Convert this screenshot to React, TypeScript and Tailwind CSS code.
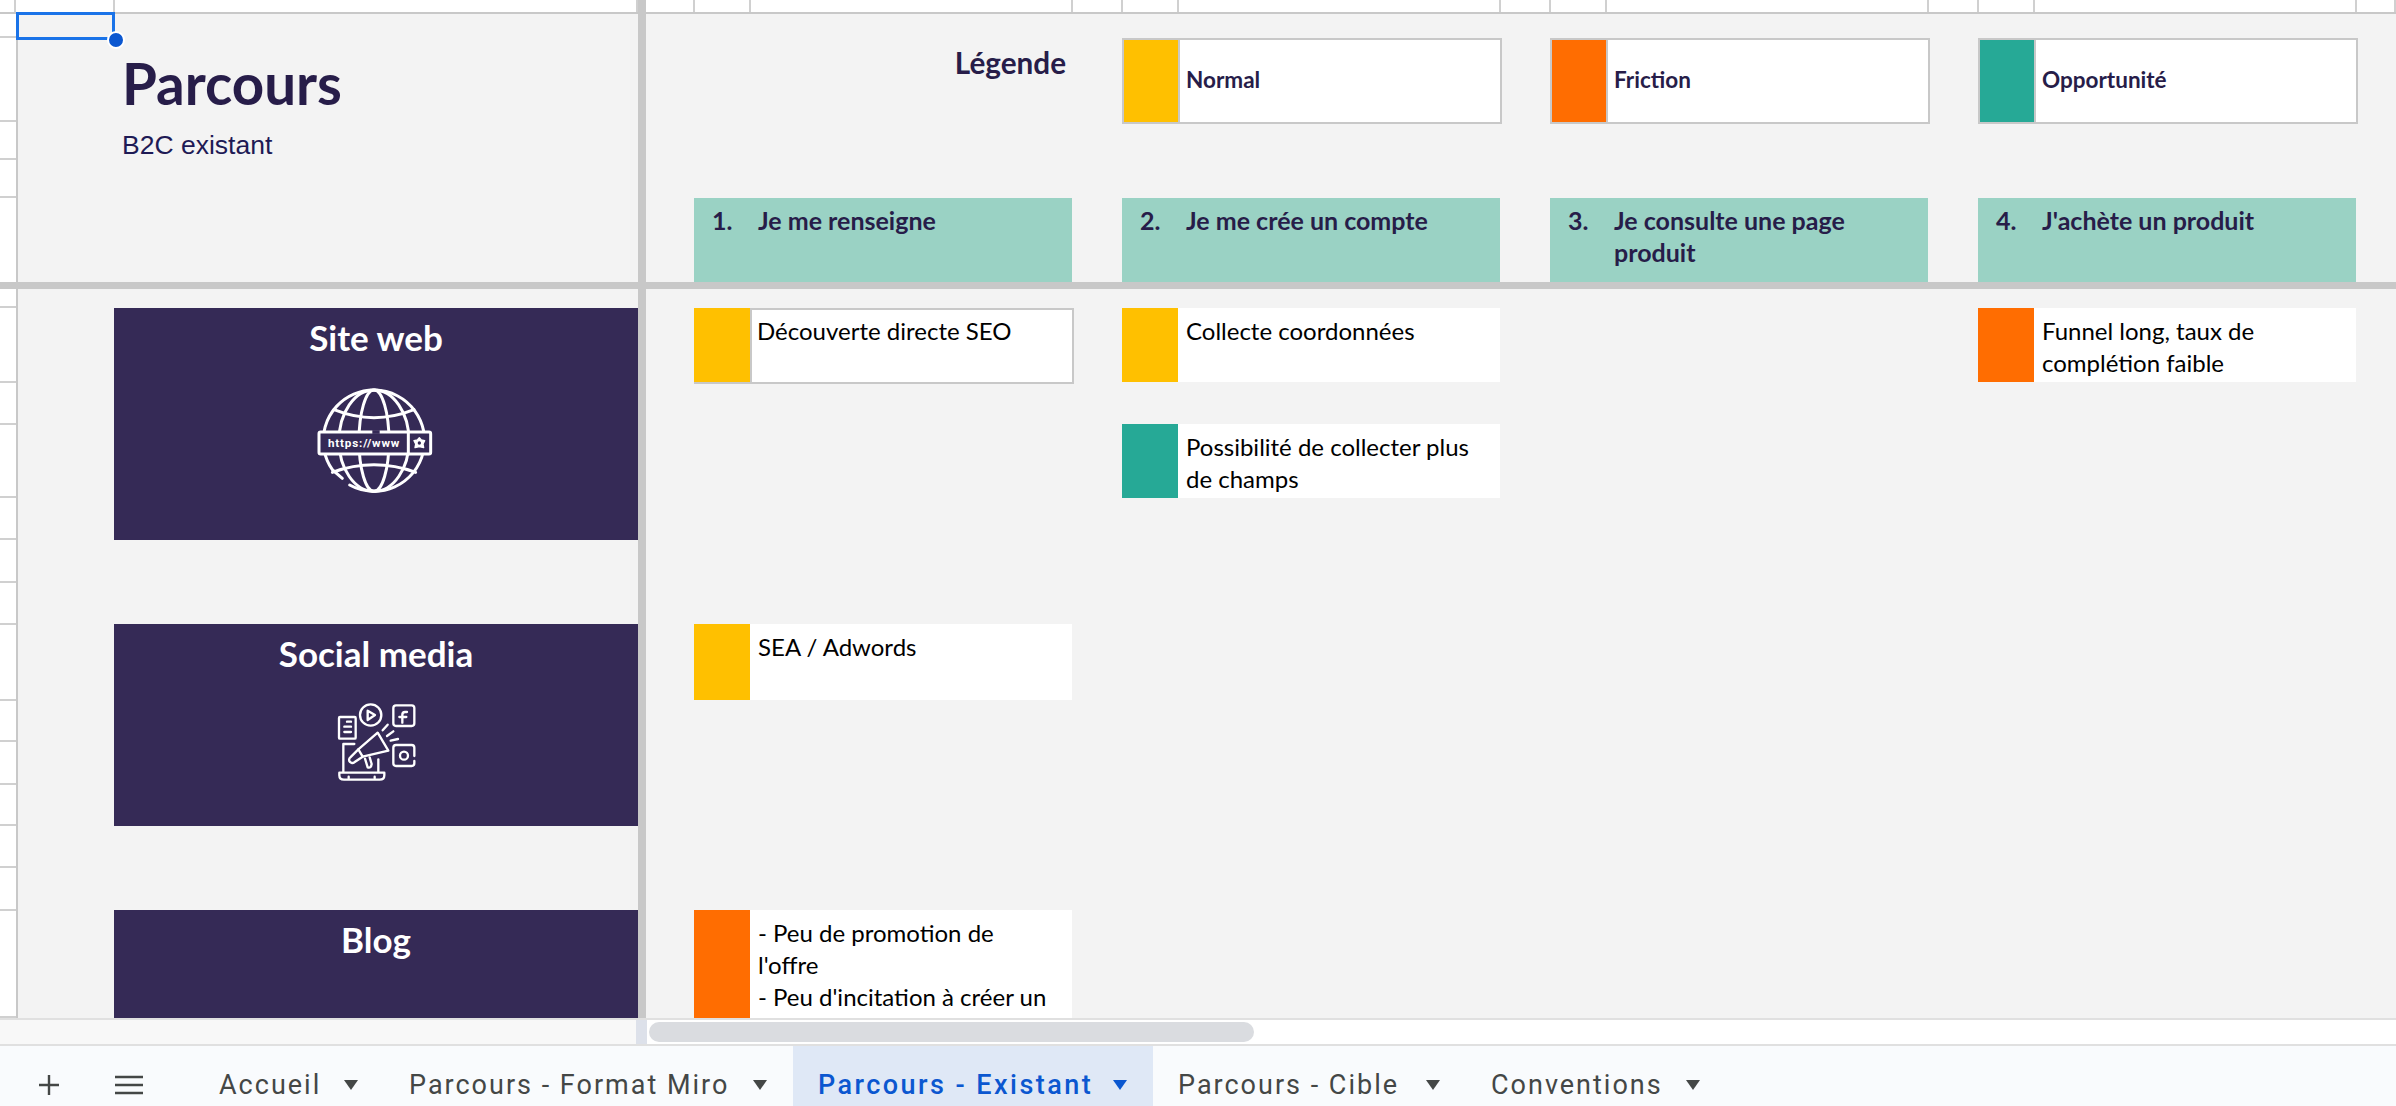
import type { ReactNode } from "react";

const bodyFont = "font-['Lato','Open_Sans',sans-serif]";

const frozenRowLines = [24, 84, 38, 38];
const bodyRowLines = [19, 75, 42, 73, 42, 43, 42, 76, 41, 43, 41, 42, 43, 107];

const stripCells = [
  { width: 16 },
  { width: 99 },
  { width: 523 },
  { width: 8, bar: true },
  { width: 49 },
  { width: 56 },
  { width: 322 },
  { width: 50 },
  { width: 56 },
  { width: 322 },
  { width: 50 },
  { width: 56 },
  { width: 322 },
  { width: 50 },
  { width: 56 },
  { width: 322 },
  { width: 39 },
];

const legend = [
  { label: "Normal", swatch: "bg-[#ffc000]" },
  { label: "Friction", swatch: "bg-[#ff6d01]" },
  { label: "Opportunité", swatch: "bg-[#26a996]" },
];

const steps = [
  { n: "1.", title: "Je me renseigne" },
  { n: "2.", title: "Je me crée un compte" },
  { n: "3.", title: "Je consulte une page produit" },
  { n: "4.", title: "J'achète un produit" },
];

const tabs = [
  { label: "Accueil", active: false, width: "w-[190px]" },
  { label: "Parcours - Format Miro", active: false, width: "w-[409px]" },
  { label: "Parcours - Existant", active: true, width: "w-[360px]" },
  { label: "Parcours - Cible", active: false, width: "w-[313px]" },
  { label: "Conventions", active: false, width: "w-[260px]" },
];

function GlobeIcon() {
  return (
    <svg viewBox="0 0 600 450" className="h-[150px] w-[200px]" fill="none" stroke="#fff" strokeWidth="9" strokeLinecap="round">
      <path d="M 212 378 A 152 152 0 0 0 285 397 A 152 152 0 1 0 160 332 L 190 358" />
      <ellipse cx="285" cy="245" rx="45" ry="152" />
      <ellipse cx="285" cy="245" rx="105" ry="152" />
      <path d="M 165 152 Q 285 200 405 152" />
      <path d="M 160 340 Q 285 295 410 340" />
      <rect x="120" y="219" width="335" height="66" rx="5" fill="#352a56" />
      <path d="M 280 219 H 302" stroke="#352a56" strokeWidth="11" strokeLinecap="butt" />
      <path d="M 388 219 V 285" />
      <text x="147" y="264" fill="#fff" stroke="none" fontFamily="'Roboto', sans-serif" fontWeight="700" fontSize="35" textLength="214">
        https://www
      </text>
      <path d="M 421 236 L 427 243 L 437 245 L 432 255 L 434 266 L 421 263 L 408 266 L 410 255 L 405 245 L 415 243 Z" fill="#fff" strokeWidth="4" strokeLinejoin="round" />
      <circle cx="421" cy="252" r="5" fill="#352a56" stroke="none" />
    </svg>
  );
}

function SocialIcon() {
  return (
    <svg viewBox="0 0 480 360" className="h-[120px] w-[160px]" fill="none" stroke="#fff" strokeWidth="7" strokeLinecap="round" strokeLinejoin="round">
      <rect x="114" y="111" width="50" height="65" rx="3" />
      <path d="M 138 125 H 150 M 130 140 H 150 M 130 156 H 150" />
      <circle cx="209" cy="105" r="32" />
      <path d="M 200 92 L 222 105 L 200 120 Z" />
      <rect x="277" y="76" width="63" height="62" rx="8" />
      <path d="M 318 96 H 312 Q 304 96 304 104 V 128 M 295 111 H 316" />
      <path d="M 245 151 L 260 134 M 258 168 L 277 154 M 269 182 L 291 177" />
      <path d="M 230 158 L 262 212 L 185 230 L 172 208 Z" />
      <path d="M 172 208 L 148 232 A 9 9 0 1 0 160 247 L 185 230" />
      <path d="M 192 236 L 200 262 Q 210 266 212 252 L 206 232" />
      <path d="M 160 192 H 127 V 275 M 232 238 V 275" />
      <path d="M 115 278 H 250 V 286 Q 250 299 236 299 H 129 Q 115 299 115 286 Z" />
      <path d="M 143 290 V 295 M 221 290 V 295" />
      <path d="M 340 243 V 250 Q 340 258 332 258 H 285 Q 277 258 277 250 V 203 Q 277 195 285 195 H 332 Q 340 195 340 203 V 228" />
      <circle cx="309" cy="227" r="12" />
    </svg>
  );
}

function Card({ swatch, bordered, className, children }: { swatch: string; bordered?: boolean; className: string; children: ReactNode }) {
  return (
    <div className={`flex overflow-hidden bg-white ${bordered ? "border-r-2 border-b-2 border-[#c8c8c8]" : ""} ${className}`}>
      <div className={`w-[56px] shrink-0 ${swatch}`} />
      <div className={`${bordered ? "border-t-2 border-l-2 border-[#c8c8c8] pl-[5px] pt-[5px]" : "pl-[8px] pt-[7px]"} flex-1 pr-[20px] text-[24px] leading-[32px] text-black`}>{children}</div>
    </div>
  );
}

function Channel({ title, className, children }: { title: string; className: string; children?: ReactNode }) {
  return (
    <div className={`flex shrink-0 flex-col items-center bg-[#352a56] ${className}`}>
      <h2 className="pt-[10px] text-[35px] font-bold leading-[38px] text-white">{title}</h2>
      {children}
    </div>
  );
}

function RowGutter({ lines }: { lines: number[] }) {
  return (
    <div className="overflow-hidden bg-white">
      {lines.map((h, i) => (
        <div key={i} className="border-b-2 border-[#d0d0d0]" style={{ height: h }} />
      ))}
    </div>
  );
}

export default function App() {
  return (
    <div className={`relative flex h-[1106px] w-[2396px] flex-col overflow-hidden bg-white ${bodyFont}`}>
      {/* column header strip */}
      <div className="flex h-[14px] shrink-0 border-b-2 border-[#c8c8c8]">
        {stripCells.map((cell, i) => (
          <div
            key={i}
            className={cell.bar ? "bg-[#c8c8c8]" : "border-r-2 border-[#d0d0d0]"}
            style={{ width: cell.width }}
          />
        ))}
      </div>

      {/* frozen rows */}
      <div className="grid h-[268px] shrink-0 grid-cols-[16px_2px_620px_8px_1fr]">
        <RowGutter lines={frozenRowLines} />
        <div className="bg-[#c8c8c8]" />
        <div className="bg-[#f3f3f3] pl-[104px] pt-[39px]">
          <h1 className="text-[56.5px] font-bold leading-[60px] text-[#271d49]">Parcours</h1>
          <p className="mt-[17px] font-['Liberation_Sans',sans-serif] text-[26.5px] leading-[30px] text-[#1e1a55]">B2C existant</p>
        </div>
        <div className="bg-[#c8c8c8]" />
        <div className="bg-[#f3f3f3] pl-[48px] pt-[24px]">
          <div className="grid h-[86px] grid-cols-[380px_380px_380px] gap-x-[48px] pl-[428px]">
            <div className="absolute left-[646px] top-[45px] w-[420px] text-right text-[29.7px] font-bold leading-[36px] text-[#271d49]">Légende</div>
            {legend.map((item) => (
              <div key={item.label} className="flex h-[86px] border-2 border-[#c8c8c8] bg-white">
                <div className={`w-[54px] shrink-0 ${item.swatch}`} />
                <div className="flex flex-1 items-center border-l-2 border-[#c8c8c8] pb-[2px] pl-[6px] text-[22.5px] font-bold text-[#271d49]">{item.label}</div>
              </div>
            ))}
          </div>
          <div className="mt-[74px] grid grid-cols-[378px_378px_378px_378px] gap-x-[50px]">
            {steps.map((step) => (
              <div key={step.n} className="flex h-[84px] bg-[#9ad2c4] pt-[6px] text-[25px] font-bold leading-[32px] text-[#271d49]">
                <span className="w-[64px] shrink-0 pl-[18px]">{step.n}</span>
                <span className="pr-[40px]">{step.title}</span>
              </div>
            ))}
          </div>
        </div>
      </div>

      {/* freeze bar */}
      <div className="h-[7px] shrink-0 bg-[#c8c8c8]" />

      {/* scrolling rows */}
      <div className="grid h-[729px] shrink-0 grid-cols-[16px_2px_620px_8px_1fr] overflow-hidden">
        <RowGutter lines={bodyRowLines} />
        <div className="bg-[#c8c8c8]" />
        <div className="flex flex-col overflow-hidden bg-[#f3f3f3] pl-[96px] pt-[19px]">
          <Channel title="Site web" className="h-[232px]">
            <div className="ml-[6px] mt-[3px]">
              <GlobeIcon />
            </div>
          </Channel>
          <Channel title="Social media" className="mt-[84px] h-[202px]">
            <div className="ml-[9px] mt-[8px]">
              <SocialIcon />
            </div>
          </Channel>
          <Channel title="Blog" className="mt-[84px] h-[108px]" />
        </div>
        <div className="bg-[#c8c8c8]" />
        <div className="grid grid-cols-[378px_378px_378px_378px] gap-x-[50px] overflow-hidden bg-[#f3f3f3] pl-[48px] pt-[19px]">
          <div className="flex flex-col">
            <Card swatch="bg-[#ffc000]" bordered className="h-[76px] w-[380px] shrink-0">Découverte directe SEO</Card>
            <Card swatch="bg-[#ffc000]" className="mt-[240px] h-[76px] shrink-0">SEA / Adwords</Card>
            <Card swatch="bg-[#ff6d01]" className="mt-[210px] h-[108px] shrink-0">
              - Peu de promotion de l'offre
              <br />- Peu d'incitation à créer un
            </Card>
          </div>
          <div className="flex flex-col">
            <Card swatch="bg-[#ffc000]" className="h-[74px] shrink-0">Collecte coordonnées</Card>
            <Card swatch="bg-[#26a996]" className="mt-[42px] h-[74px] shrink-0">Possibilité de collecter plus de champs</Card>
          </div>
          <div />
          <div className="flex flex-col">
            <Card swatch="bg-[#ff6d01]" className="h-[74px] shrink-0">Funnel long, taux de complétion faible</Card>
          </div>
        </div>
      </div>

      {/* horizontal scrollbar */}
      <div className="flex h-[28px] shrink-0 border-y-2 border-[#e0e0e0]">
        <div className="w-[636px] bg-[#f8f8f8]" />
        <div className="w-[11px] bg-[#dde1ea]" />
        <div className="flex-1 bg-white py-[2px] pl-[2px]">
          <div className="h-[20px] w-[605px] rounded-[10px] bg-[#dadce0]" />
        </div>
      </div>

      {/* sheet tabs */}
      <div className="flex h-[60px] shrink-0 bg-[#f9fbfd] font-['Roboto',sans-serif]">
        <div className="flex w-[194px] items-center pt-[18px] text-[#444746]">
          <svg viewBox="0 0 24 24" className="ml-[37px] h-[24px] w-[24px]" fill="none" stroke="currentColor" strokeWidth="2.4">
            <path d="M 12 2 V 22 M 2 12 H 22" />
          </svg>
          <svg viewBox="0 0 28 20" className="ml-[54px] h-[20px] w-[28px]" fill="none" stroke="currentColor" strokeWidth="2.6">
            <path d="M 0 2 H 28 M 0 10 H 28 M 0 18 H 28" />
          </svg>
        </div>
        {tabs.map((tab) => (
          <div
            key={tab.label}
            className={`flex items-center justify-between pl-[25px] pr-[26px] pt-[18px] text-[27px] ${tab.width} ${tab.active ? "bg-[#dfe8f6] font-medium tracking-[2.45px] text-[#0b57d0]" : "tracking-[2px] text-[#444746]"}`}
          >
            <span className="whitespace-nowrap">{tab.label}</span>
            <svg viewBox="0 0 14 14" className="h-[14px] w-[14px]" fill="currentColor">
              <path d="M 0 2 H 14 L 7 12 Z" />
            </svg>
          </div>
        ))}
      </div>

      {/* selected cell */}
      <div className="absolute left-[16px] top-[12px] h-[28px] w-[99px] border-[3px] border-[#1a73e8]" />
      <div className="absolute left-[107px] top-[31px] h-[18px] w-[18px] rounded-full border-2 border-white bg-[#0b57d0]" />
    </div>
  );
}
